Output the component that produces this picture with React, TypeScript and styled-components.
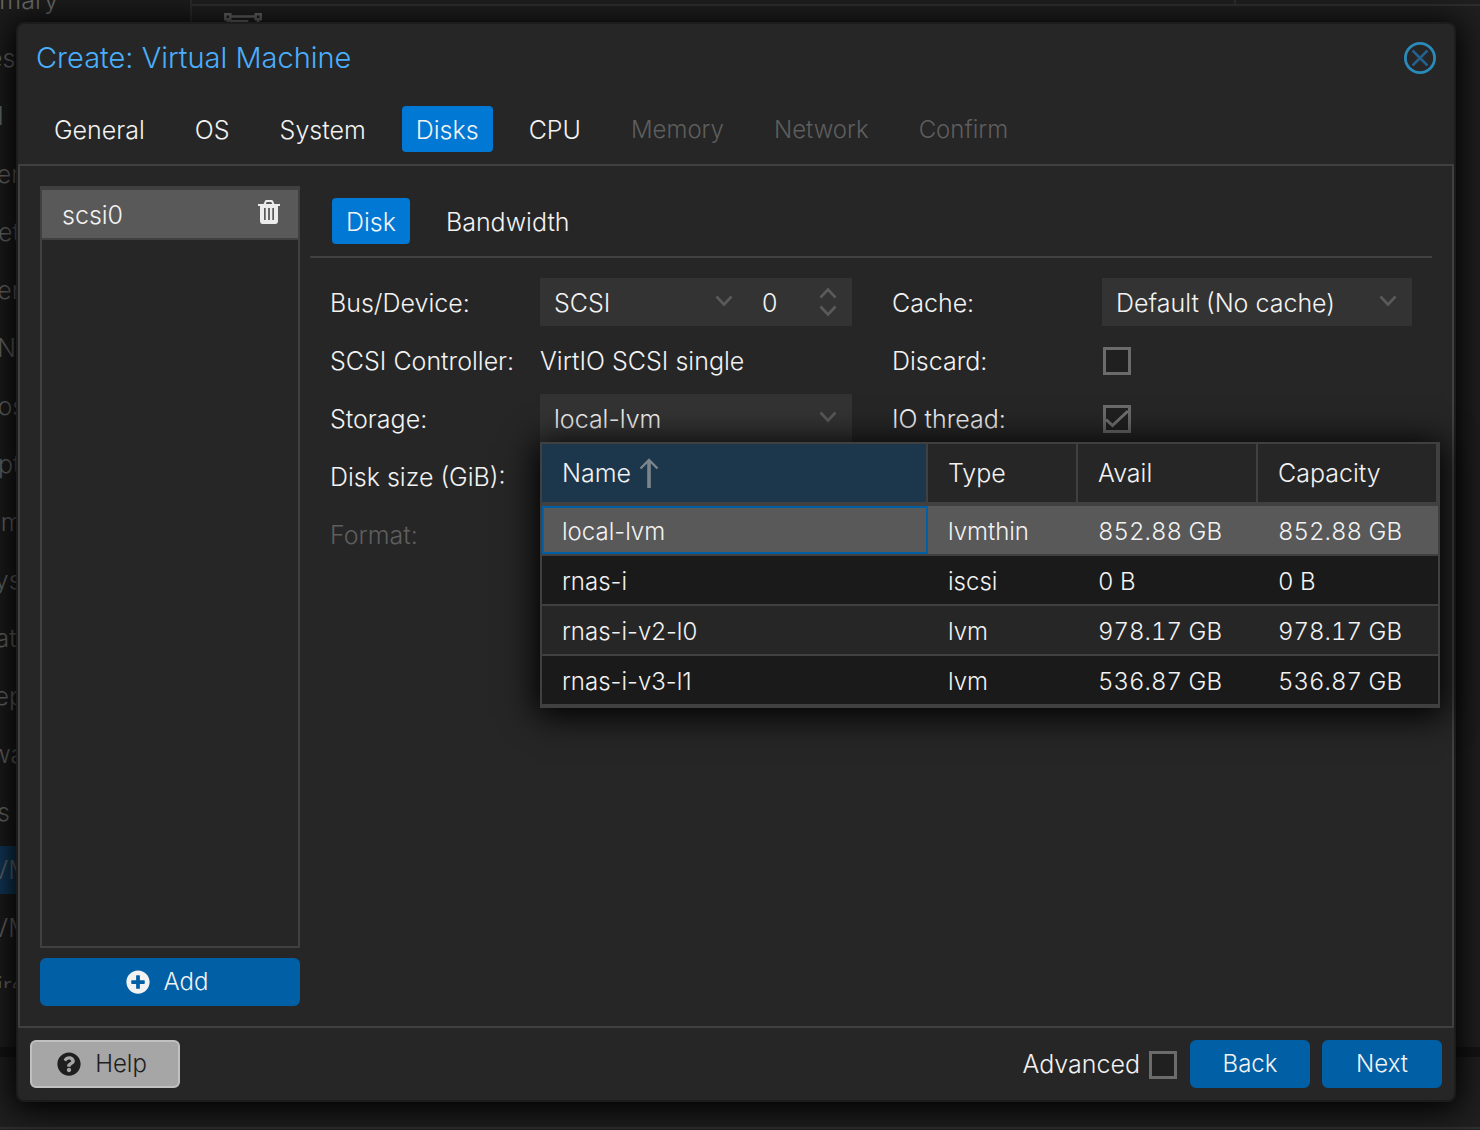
import React, { useState } from "react";
import styled, { createGlobalStyle, css } from "styled-components";
import { FaPlusCircle, FaQuestionCircle } from "react-icons/fa";

const color = {
  panel: "#262626",
  edge: "#1c1c1c",
  line: "#404040",
  field: "#333333",
  selected: "#595959",
  text: "#f2f2f2",
  muted: "#5e5e5e",
  accent: "#0078d4",
  button: "#005fa5",
  title: "#4aaefc",
};

const GlobalStyle = createGlobalStyle`
  *, *::before, *::after { box-sizing: border-box; }
  body {
    margin: 0;
    overflow: hidden;
    background: #1f1f1f;
    color: ${color.text};
    font: 300 25px/32px Inter, "Liberation Sans", Arial, sans-serif;
  }
  button, input, select { font: inherit; color: inherit; }
  button { cursor: pointer; }
`;

/* ---------- page behind the dialog ---------- */

const Page = styled.div`
  position: relative;
  display: flex;
  flex-direction: column;
  height: 100vh;
  overflow: hidden;
`;

const PageMain = styled.div`
  display: flex;
  flex: 1;
  min-height: 0;
  border-bottom: 10px solid #141414;
`;

const Sidebar = styled.nav`
  width: 192px;
  height: 988px;
  flex: none;
  overflow: hidden;
  border-right: 2px solid #2b2b2b;
  background: #1c1c1c;
`;

const NavList = styled.ul`
  list-style: none;
  margin: -24px 0 0;
  padding: 0;
  display: flex;
  flex-direction: column;
  gap: 10px;
`;

const NavItem = styled.li<{ $child?: boolean; $active?: boolean }>`
  height: 48px;
  line-height: 48px;
  white-space: nowrap;
  color: #6a6a6a;
  text-indent: ${(p) => (p.$child ? "-21px" : "-53px")};
  background: ${(p) => (p.$active ? "#12395a" : "transparent")};
`;

const Content = styled.div`
  flex: 1;
  display: flex;
  flex-direction: column;
`;

const ContentBar = styled.div`
  height: 6px;
  border-bottom: 2px solid #2e2e2e;
  display: flex;
  justify-content: flex-end;
`;

const ContentBarEnd = styled.div`
  width: 246px;
  border-left: 2px solid #2e2e2e;
`;

const ContentBody = styled.div`
  padding: 6px 32px;
  line-height: 0;
`;

const PageLog = styled.div`
  height: 73px;
  padding-top: 70px;
`;

const LogRule = styled.div`
  height: 2px;
  background: #2e2e2e;
`;

/* ---------- dialog ---------- */

const Overlay = styled.div`
  position: absolute;
  inset: 0;
  display: flex;
  padding: 22px 24px 28px 16px;
`;

const Dialog = styled.section`
  flex: 1;
  display: flex;
  flex-direction: column;
  border: 2px solid ${color.edge};
  border-radius: 8px;
  background: ${color.panel};
  box-shadow: 0 4px 32px 4px #000;
`;

const Header = styled.header`
  display: flex;
  align-items: center;
  justify-content: space-between;
  padding: 18px;
`;

const Title = styled.h1`
  margin: 0;
  font-size: 29px;
  font-weight: inherit;
  line-height: 32px;
  color: ${color.title};
`;

const CloseButton = styled.button`
  display: flex;
  padding: 0;
  border: 0;
  background: none;
`;

const TabBar = styled.div<{ $inner?: boolean }>`
  display: flex;
  gap: 22px;
  padding: ${(p) => (p.$inner ? "12px 22px" : "14px 22px 12px")};
  border-bottom: ${(p) => (p.$inner ? `2px solid ${color.line}` : "0")};
`;

const Tab = styled.button<{ $active?: boolean }>`
  height: 46px;
  padding: 1px 14px 0;
  border: 0;
  border-radius: 4px;
  background: ${(p) => (p.$active ? color.accent : "transparent")};
  &:disabled {
    padding-top: 2px;
    font-size: 24px;
    color: ${color.muted};
    cursor: default;
  }
`;

const Body = styled.div`
  flex: 1;
  min-height: 0;
  display: flex;
  gap: 10px;
  padding: 20px;
  border: 2px solid ${color.line};
`;

const DiskColumn = styled.div`
  width: 260px;
  flex: none;
  display: flex;
  flex-direction: column;
  gap: 10px;
`;

const DiskList = styled.ul`
  flex: 1;
  margin: 0;
  padding: 0;
  list-style: none;
  border: 2px solid ${color.line};
  border-top-width: 4px;
`;

const DiskItem = styled.li`
  display: flex;
  align-items: center;
  justify-content: space-between;
  height: 50px;
  padding: 1px 18px 0 20px;
  border-bottom: 2px solid ${color.line};
  background: ${color.selected};
`;

const IconButton = styled.button`
  display: flex;
  padding: 0 0 6px;
  border: 0;
  background: none;
`;

const Button = styled.button<{ $plain?: boolean; $icon?: boolean; $width?: string }>`
  display: flex;
  align-items: center;
  justify-content: center;
  gap: 14px;
  width: ${(p) => p.$width ?? "120px"};
  height: 48px;
  padding: ${(p) => (p.$icon ? "0 6px 0 0" : "0")};
  font-size: 24px;
  border: 2px solid ${color.button};
  border-radius: 6px;
  background: ${color.button};
  ${(p) =>
    p.$plain &&
    css`
      border-color: #c0c0c0;
      background: #a6a6a6;
      color: #1f1f1f;
    `}
`;

const Detail = styled.div`
  flex: 1;
  min-width: 0;
`;

const Form = styled.form`
  display: grid;
  grid-template-columns: 522fr 520fr;
  gap: 40px;
  padding: 20px;
`;

const FormColumn = styled.div`
  display: flex;
  flex-direction: column;
  gap: 10px;
`;

const Row = styled.div`
  display: flex;
  align-items: center;
  height: 48px;
`;

const Label = styled.label<{ $disabled?: boolean }>`
  width: 210px;
  flex: none;
  padding-top: 1px;
  white-space: nowrap;
  color: ${(p) => (p.$disabled ? color.muted : "inherit")};
`;

const Value = styled.span`
  padding-top: 1px;
`;

const Field = styled.div<{ $narrow?: boolean }>`
  position: relative;
  display: flex;
  flex: ${(p) => (p.$narrow ? "0 0 104px" : "1")};
  min-width: 0;
  height: 48px;
  background: ${color.field};
`;

const control = css`
  flex: 1;
  width: 100%;
  min-width: 0;
  height: 48px;
  padding: 2px 14px 0;
  border: 0;
  border-radius: 0;
  outline: 0;
  background: transparent;
  appearance: none;
`;

const Select = styled.select`
  ${control}
`;

const Input = styled.input`
  ${control}
  &::-webkit-inner-spin-button {
    appearance: none;
  }
`;

const Trigger = styled.span`
  position: absolute;
  right: 15px;
  top: 17px;
  display: flex;
  pointer-events: none;
`;

const Spinner = styled.span`
  position: absolute;
  right: 15px;
  top: 9px;
  display: flex;
  flex-direction: column;
  gap: 6px;
`;

const SpinButton = styled.button`
  display: flex;
  padding: 0;
  border: 0;
  background: none;
`;

const CheckWrap = styled.span`
  position: relative;
  display: flex;
  width: 30px;
  height: 28px;
  margin-top: 2px;
  padding-left: 1px;
`;

const CheckBox = styled.input`
  appearance: none;
  width: 28px;
  height: 28px;
  margin: 0;
  border: 3px solid #6b6b6b;
  background: #202020;
`;

const CheckMark = styled.svg`
  position: absolute;
  left: 1px;
  top: 0;
  pointer-events: none;
`;

const Footer = styled.footer`
  display: flex;
  align-items: center;
  gap: 12px;
  padding: 12px;
`;

const Advanced = styled.label`
  display: flex;
  align-items: center;
  gap: 8px;
  margin-left: auto;
`;

/* ---------- storage drop-down ---------- */

const Picker = styled.div`
  position: absolute;
  z-index: 2;
  top: 48px;
  left: 0;
  width: 900px;
  border: 2px solid ${color.line};
  border-bottom-width: 4px;
  background: ${color.panel};
  box-shadow: 0 4px 32px 4px #000;
`;

const Grid = styled.table`
  width: 100%;
  table-layout: fixed;
  border-collapse: separate;
  border-spacing: 0;
  text-align: left;
`;

const HeadCell = styled.th<{ $width: number; $sorted?: boolean }>`
  width: ${(p) => p.$width}px;
  height: 62px;
  padding: 0 20px;
  font-weight: inherit;
  border-right: 2px solid ${color.line};
  border-bottom: 4px solid ${color.line};
  background: ${(p) => (p.$sorted ? "#1c374c" : color.panel)};
`;

const HeadLabel = styled.span`
  display: flex;
  align-items: center;
  gap: 8px;
`;

const GridRow = styled.tr<{ $selected?: boolean }>`
  background: ${color.panel};
  &:nth-child(even) {
    background: #1a1a1a;
  }
  ${(p) =>
    p.$selected &&
    css`
      background: ${color.selected};
    `}
`;

const Cell = styled.td<{ $focused?: boolean; $numeric?: boolean }>`
  height: 50px;
  padding: 3px 20px 0;
  font-size: 24px;
  font-variant-numeric: ${(p) => (p.$numeric ? "tabular-nums" : "normal")};
  border-bottom: 2px solid ${color.line};
  box-shadow: ${(p) => (p.$focused ? `inset 0 0 0 2px ${color.button}` : "none")};
  ${GridRow}:last-child & {
    height: 48px;
    border-bottom: 0;
  }
`;

/* ---------- icons ---------- */

const Chevron = ({ up = false }: { up?: boolean }) => (
  <svg width="18" height="12" viewBox="0 0 18 12" fill="none" stroke="#5a5a5a" strokeWidth="2.6">
    <path d={up ? "M1.5 10.5 9 2.5l7.5 8" : "M1.5 1.5 9 9.5l7.5-8"} />
  </svg>
);

const CloseIcon = () => (
  <svg width="32" height="32" viewBox="0 0 32 32" fill="none">
    <circle cx="16" cy="16" r="14.6" stroke="#2a8bbb" strokeWidth="2.8" />
    <path d="m8.500 8.500 15 15m0-15-15 15" stroke="#24618f" strokeWidth="2.500" />
  </svg>
);

const TrashIcon = () => (
  <svg width="22" height="24" viewBox="0 0 22 24">
    <path
      fill="#ececec"
      fillRule="evenodd"
      d="M0 4h5.6l1.2-2.7C7.1.5 7.9 0 8.8 0h4.4c.9 0 1.700.5 2 1.300L16.400 4H22v2h-2v15c0 1.700-1.100 3-2.500 3h-13C3.100 24 2 22.700 2 21V6H0zm7.800 0h6.400l-.9-2H8.700zM6 8v12h1.700V8zm4.100 0v12h1.800V8zm4.200 0v12H16V8z"
    />
  </svg>
);

const SortIcon = () => (
  <svg width="20" height="30" viewBox="0 0 20 30" fill="none" stroke="#7c858c">
    <path d="M10 2v28" strokeWidth="3.6" />
    <path d="M1.500 10.500 10 2l8.500 8.500" strokeWidth="2.400" />
  </svg>
);

const GroupIcon = () => (
  <svg width="38" height="30" viewBox="0 0 38 30" fill="none" stroke="#686868" strokeWidth="2.5">
    <path d="M1.300 2.300h5v5h-5zM31.700 2.300h5v5h-5zM1.300 23h5v5h-5zM31.700 23h5v5h-5zM7 4.500h24M7 26h24M4 8v15M34 8v15M7 9.300h16V18H7z" />
  </svg>
);

/* ---------- data ---------- */

const NAV: { text: string; child?: boolean; active?: boolean }[] = [
  { text: "Summary" },
  { text: "Notes" },
  { text: "Shell" },
  { text: "System" },
  { text: "Network", child: true },
  { text: "Certificates", child: true },
  { text: "DNS", child: true },
  { text: "Hosts", child: true },
  { text: "Options", child: true },
  { text: "Time", child: true },
  { text: "System Log", child: true },
  { text: "Updates" },
  { text: "Repositories", child: true },
  { text: "Firewall" },
  { text: "Disks" },
  { text: "LVM", child: true, active: true },
  { text: "LVM-Thin", child: true },
  { text: "Directory", child: true },
];

const STEPS = ["General", "OS", "System", "Disks", "CPU", "Memory", "Network", "Confirm"];
const REACHED = 4;

const STORAGES = [
  { name: "local-lvm", type: "lvmthin", avail: "852.88 GB", capacity: "852.88 GB" },
  { name: "rnas-i", type: "iscsi", avail: "0 B", capacity: "0 B" },
  { name: "rnas-i-v2-l0", type: "lvm", avail: "978.17 GB", capacity: "978.17 GB" },
  { name: "rnas-i-v3-l1", type: "lvm", avail: "536.87 GB", capacity: "536.87 GB" },
];

const Check = ({ id, initial = false }: { id: string; initial?: boolean }) => {
  const [on, setOn] = useState(initial);
  return (
    <CheckWrap>
      <CheckBox id={id} type="checkbox" checked={on} onChange={() => setOn(!on)} />
      {on && (
        <CheckMark width="28" height="28" viewBox="0 0 28 28" fill="none" stroke="#707070" strokeWidth="3">
          <path d="M3 14.500 9.500 20.500 25 6" />
        </CheckMark>
      )}
    </CheckWrap>
  );
};

const StoragePicker = ({ value, onPick }: { value: string; onPick: (name: string) => void }) => (
  <Picker>
    <Grid>
      <thead>
        <tr>
          <HeadCell $width={386} $sorted aria-sort="ascending">
            <HeadLabel>
              Name
              <SortIcon />
            </HeadLabel>
          </HeadCell>
          <HeadCell $width={150}>Type</HeadCell>
          <HeadCell $width={180}>Avail</HeadCell>
          <HeadCell $width={180}>Capacity</HeadCell>
        </tr>
      </thead>
      <tbody>
        {STORAGES.map((s) => (
          <GridRow key={s.name} $selected={s.name === value} onClick={() => onPick(s.name)}>
            <Cell $focused={s.name === value}>{s.name}</Cell>
            <Cell>{s.type}</Cell>
            <Cell $numeric>{s.avail}</Cell>
            <Cell $numeric>{s.capacity}</Cell>
          </GridRow>
        ))}
      </tbody>
    </Grid>
  </Picker>
);

const DiskForm = () => {
  const [device, setDevice] = useState(0);
  const [storage, setStorage] = useState("local-lvm");
  return (
    <Form onSubmit={(e) => e.preventDefault()}>
      <FormColumn>
        <Row>
          <Label htmlFor="bus">Bus/Device:</Label>
          <Field>
            <Select id="bus">
              <option>SCSI</option>
            </Select>
            <Trigger>
              <Chevron />
            </Trigger>
          </Field>
          <Field $narrow>
            <Input
              type="number"
              aria-label="Device number"
              value={device}
              onChange={(e) => setDevice(Number(e.target.value))}
            />
            <Spinner>
              <SpinButton type="button" aria-label="Increase" onClick={() => setDevice(device + 1)}>
                <Chevron up />
              </SpinButton>
              <SpinButton type="button" aria-label="Decrease" onClick={() => setDevice(Math.max(0, device - 1))}>
                <Chevron />
              </SpinButton>
            </Spinner>
          </Field>
        </Row>
        <Row>
          <Label as="span">SCSI Controller:</Label>
          <Value>VirtIO SCSI single</Value>
        </Row>
        <Row>
          <Label htmlFor="storage">Storage:</Label>
          <Field>
            <Input id="storage" role="combobox" aria-expanded="true" readOnly value={storage} />
            <Trigger>
              <Chevron />
            </Trigger>
            <StoragePicker value={storage} onPick={setStorage} />
          </Field>
        </Row>
        <Row>
          <Label htmlFor="size">Disk size (GiB):</Label>
          <Field>
            <Input id="size" type="number" />
          </Field>
        </Row>
        <Row>
          <Label htmlFor="format" $disabled>
            Format:
          </Label>
          <Field>
            <Select id="format" disabled />
          </Field>
        </Row>
      </FormColumn>
      <FormColumn>
        <Row>
          <Label htmlFor="cache">Cache:</Label>
          <Field>
            <Select id="cache">
              <option>Default (No cache)</option>
            </Select>
            <Trigger>
              <Chevron />
            </Trigger>
          </Field>
        </Row>
        <Row>
          <Label htmlFor="discard">Discard:</Label>
          <Check id="discard" />
        </Row>
        <Row>
          <Label htmlFor="iothread">IO thread:</Label>
          <Check id="iothread" initial />
        </Row>
      </FormColumn>
    </Form>
  );
};

export default function App() {
  return (
    <>
      <GlobalStyle />
      <Page>
        <PageMain>
          <Sidebar>
            <NavList>
              {NAV.map((n) => (
                <NavItem key={n.text} $child={n.child} $active={n.active}>
                  {n.text}
                </NavItem>
              ))}
            </NavList>
          </Sidebar>
          <Content>
            <ContentBar>
              <ContentBarEnd />
            </ContentBar>
            <ContentBody>
              <GroupIcon />
            </ContentBody>
          </Content>
        </PageMain>
        <PageLog>
          <LogRule />
        </PageLog>
        <Overlay>
          <Dialog role="dialog" aria-labelledby="dialog-title">
            <Header>
              <Title id="dialog-title">Create: Virtual Machine</Title>
              <CloseButton aria-label="Close">
                <CloseIcon />
              </CloseButton>
            </Header>
            <TabBar role="tablist">
              {STEPS.map((s, i) => (
                <Tab key={s} role="tab" $active={s === "Disks"} disabled={i > REACHED}>
                  {s}
                </Tab>
              ))}
            </TabBar>
            <Body>
              <DiskColumn>
                <DiskList>
                  <DiskItem>
                    scsi0
                    <IconButton aria-label="Remove disk">
                      <TrashIcon />
                    </IconButton>
                  </DiskItem>
                </DiskList>
                <Button $icon $width="100%">
                  <FaPlusCircle size={24} />
                  Add
                </Button>
              </DiskColumn>
              <Detail>
                <TabBar role="tablist" $inner>
                  <Tab role="tab" $active>
                    Disk
                  </Tab>
                  <Tab role="tab">Bandwidth</Tab>
                </TabBar>
                <DiskForm />
              </Detail>
            </Body>
            <Footer>
              <Button $icon $plain $width="150px">
                <FaQuestionCircle size={24} />
                Help
              </Button>
              <Advanced htmlFor="advanced">
                Advanced
                <Check id="advanced" />
              </Advanced>
              <Button>Back</Button>
              <Button>Next</Button>
            </Footer>
          </Dialog>
        </Overlay>
      </Page>
    </>
  );
}
